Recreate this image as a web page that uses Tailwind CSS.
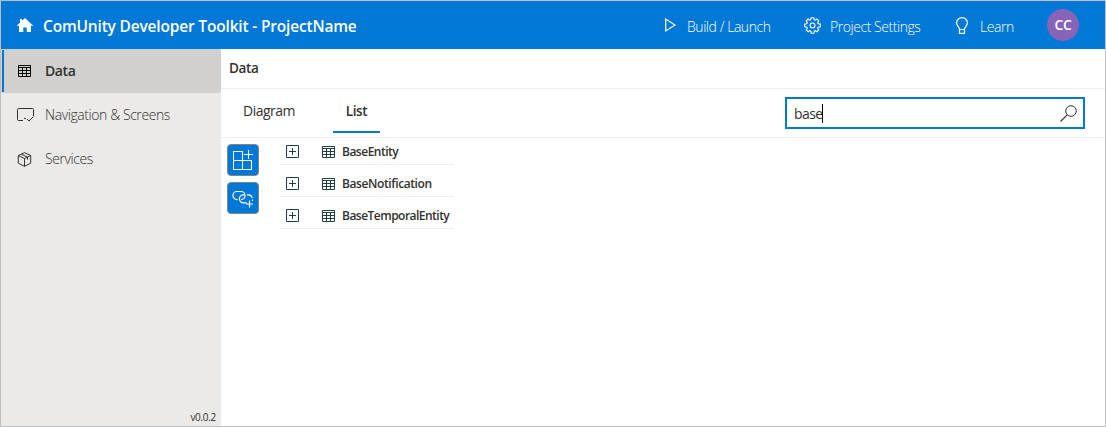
<!DOCTYPE html>
<html lang="en">
<head>
<meta charset="utf-8">
<title>ComUnity Developer Toolkit</title>
<script src="https://cdn.jsdelivr.net/npm/@tailwindcss/browser@4"></script>
</head>
<body class="h-[427px] w-[1106px] overflow-hidden bg-white font-['Open_Sans','Noto_Sans',sans-serif] text-[#323130]">
<svg class="hidden">
  <symbol id="table" viewBox="0 0 13 12"><path d="M.5.5h12v11H.5zM.5 2.5h12M.5 5.5h12M.5 8.5h12M4.5 2.5v9M8.5 2.5v9" fill="none" stroke="currentColor"/></symbol>
  <symbol id="expand" viewBox="0 0 13 13"><path d="M.5.5h12v12H.5zM3 6.5h7M6.5 3v7" fill="none" stroke="currentColor"/></symbol>
</svg>
<div class="flex h-full w-full flex-col border border-[#bfbfbf]">
  <header class="flex h-12 shrink-0 items-center bg-[#0078d7] text-sm text-white">
    <svg class="ml-4 h-4 w-4" viewBox="0 0 16 16"><path d="M8 1 16 8.4l-.8.9L14 8.200V15H9.700v-4.500H6.300V15H2V8.200L.8 9.300 0 8.400 3 5.600V2h2v1.800z" fill="currentColor"/></svg>
    <h1 class="ml-[10px] w-[621px] whitespace-nowrap pt-[3px] text-[15.500px] font-semibold tracking-[-0.18px]">ComUnity Developer Toolkit - ProjectName</h1>
    <svg class="h-4 w-3" viewBox="0 0 12 16"><path d="M1.700 2v12L11 8z" fill="none" stroke="currentColor" stroke-width="1.200"/></svg>
    <span class="ml-[11px] w-[117px] whitespace-nowrap pt-[3px] text-[14px] font-light tracking-[-0.45px]">Build / Launch</span>
    <svg class="h-[17px] w-[17px]" viewBox="0 0 17 17" fill="none" stroke="currentColor" stroke-width="1.100"><path d="M7.200.7h2.600l.4 2 1 .4L12.900 2l1.900 1.900-1.100 1.700.4 1 2.200.5v2.600l-2.200.5-.4 1 1.100 1.700-1.900 1.900-1.700-1.100-1 .4-.4 2.200H7.200l-.4-2.200-1-.4-1.700 1.100-1.900-1.900 1.100-1.700-.4-1-2.200-.5V7.100l2.200-.5.400-1L2.200 3.900 4.100 2l1.700 1.100 1-.4z"/><circle cx="8.500" cy="8.400" r="2.400"/></svg>
    <span class="ml-[9px] w-[126px] whitespace-nowrap pt-[3px] text-[14px] font-light tracking-[-0.45px]">Project Settings</span>
    <svg class="h-[17px] w-3" viewBox="0 0 12 17"><path d="M3.500 12.500c0-2.500-2.900-3.500-2.900-6.700a5.400 5.100 0 0 1 10.800 0c0 3.200-2.900 4.200-2.900 6.700zM3.500 12.500v3.800h5v-3.800" fill="none" stroke="currentColor" stroke-width="1.200"/></svg>
    <span class="ml-[12px] w-[67px] pt-[3px] text-[14px] font-light tracking-[-0.45px]">Learn</span>
    <div class="flex h-8 w-8 shrink-0 items-center justify-center rounded-full bg-[#8764b8] text-[14px] font-semibold tracking-[-0.3px]">CC</div>
  </header>
  <div class="flex min-h-0 flex-1">
    <aside class="flex w-[220px] shrink-0 flex-col bg-[#ebeae8] text-[14px] font-light tracking-[-0.42px]">
      <div class="flex h-11 items-center rounded-r-xs bg-[#d1d0ce] font-semibold">
        <div class="ml-px h-[42px] w-0.5 bg-[#0078d7]"></div>
        <svg class="ml-[14px] mr-[14px] h-3 w-[13px] text-black"><use href="#table"/></svg>
        <span class="pb-0.5">Data</span>
      </div>
      <div class="flex h-11 items-center">
        <svg class="ml-4 mr-[11px] h-[14px] w-[17px]" viewBox="0 0 17 14"><path d="M6 12.500H1.500A1 1 0 0 1 .5 11.500V1.500a1 1 0 0 1 1-1h14a1 1 0 0 1 1 1v7M7 10.500h2M10 11l2 2 4-4" fill="none" stroke="currentColor"/></svg>
        <span class="whitespace-nowrap pb-0.5">Navigation &amp; Screens</span>
      </div>
      <div class="flex h-11 items-center">
        <svg class="ml-4 mr-[13px] h-[15px] w-[15px]" viewBox="0 0 15 15"><path d="M7.500.7 13.700 3.500v7.700L7.500 14.300 1.300 11.200V3.500zM1.300 3.500l6.200 3 6.200-3M7.500 6.500v7.800M4.300 2.200l6.200 3v2.500" fill="none" stroke="currentColor"/></svg>
        <span class="pb-0.5">Services</span>
      </div>
      <div class="mt-auto pb-px pr-[5px] text-right text-[10px] font-normal tracking-[-0.3px]">v0.0.2</div>
    </aside>
    <main class="flex min-w-0 flex-1 flex-col tracking-[-0.35px]">
      <div class="flex h-10 shrink-0 items-center border-b border-[#efeeed] pb-px pl-2 text-[13.500px] font-semibold">Data</div>
      <div class="flex h-[49px] shrink-0 items-center border-b border-[#efeeed]">
        <div class="ml-[22px] w-[90px] pb-[5px] text-[14px] tracking-[-0.5px]">Diagram</div>
        <div class="flex h-[44px] w-[47px] items-center justify-center self-start border-b-2 border-[#0078d7] pt-0.5 text-[13.500px] font-semibold">List</div>
        <div class="ml-auto mr-5 flex h-8 w-[300px] items-center border-2 border-[#0078d7] pl-[7px]">
          <span class="text-[14px] tracking-[-0.6px]">base</span><span class="h-[19px] w-px bg-black"></span>
          <svg class="ml-auto mr-[6px] h-[17px] w-[17px]" viewBox="0 0 17 17"><circle cx="11" cy="6" r="5.300" fill="none" stroke="currentColor"/><path d="M7.200 9.800.5 16.500" stroke="currentColor" stroke-width="1.100"/></svg>
        </div>
      </div>
      <div class="flex">
        <div class="ml-1.5 flex flex-col gap-1.5 pt-1.5">
          <button class="flex h-8 w-8 items-center justify-center rounded border border-[#858381] bg-[#0078d7] text-white"><svg class="h-5 w-5" viewBox="0 0 20 20"><path d="M.5 1.500h9v18h-9zM.5 10.500h18v9h-9M15.500 0v9M11 4.500h9" fill="none" stroke="currentColor" stroke-width="1.100"/></svg></button>
          <button class="flex h-8 w-8 items-center justify-center rounded border border-[#858381] bg-[#0078d7] text-white"><svg class="h-5 w-[22px]" viewBox="0 0 22 20"><path d="M5.800 11.600H5A4 4 0 0 1 5 3.500h4a4 4 0 0 1 0 8.100M12 6.800H11.500a4 4 0 0 0 0 8.100H14.500M15 6.800h1.500a4 4 0 0 1 3.800 3M20.500 11.500v1.500M17.500 12.500v7M14 16h7" fill="none" stroke="currentColor" stroke-width="1.200"/></svg></button>
        </div>
        <div class="ml-[21px] w-[174px] text-[12px] font-semibold tracking-[-0.52px]">
          <div class="flex h-[27px] items-center border-b border-[#efeeed] pt-px pl-1.5"><svg class="mr-[23px] h-[13px] w-[13px] text-[#1f4040]"><use href="#expand"/></svg><svg class="mr-[7px] h-3 w-[13px] text-[#1f4040]"><use href="#table"/></svg><span class="tracking-[-0.5px]">BaseEntity</span></div>
          <div class="flex h-8 items-center border-b border-[#efeeed] pt-1.5 pl-1.5"><svg class="mr-[23px] h-[13px] w-[13px] text-[#1f4040]"><use href="#expand"/></svg><svg class="mr-[7px] h-3 w-[13px] text-[#1f4040]"><use href="#table"/></svg><span class="tracking-[-0.4px]">BaseNotification</span></div>
          <div class="flex h-8 items-center border-b border-[#efeeed] pt-1.5 pl-1.5"><svg class="mr-[23px] h-[13px] w-[13px] text-[#1f4040]"><use href="#expand"/></svg><svg class="mr-[7px] h-3 w-[13px] text-[#1f4040]"><use href="#table"/></svg><span>BaseTemporalEntity</span></div>
        </div>
      </div>
    </main>
  </div>
</div>
</body>
</html>
